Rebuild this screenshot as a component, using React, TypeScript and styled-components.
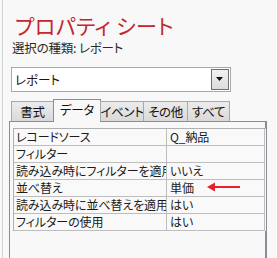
import React from "react";
import styled, { createGlobalStyle } from "styled-components";

const GlobalStyle = createGlobalStyle`
  html, body {
    margin: 0;
    padding: 0;
    background: #f8f8f8;
  }
  body {
    font-family: "Noto Sans CJK JP", "Noto Sans", sans-serif;
    font-feature-settings: "palt";
    color: #1a1a1a;
  }
`;

// window edge on the left, with the little tick of the sizing grip
const Frame = styled.div`
  position: relative;
  height: 258px;
  margin-left: 2px;
  border-left: 1px solid #d4d4d4;
  overflow: hidden;

  &::before {
    content: "";
    position: absolute;
    left: -3px;
    top: 24px;
    width: 3px;
    height: 1px;
    background: #606060;
  }
`;

const Header = styled.div`
  padding: 13px 0 0 12px;
`;

const Title = styled.div`
  font-size: 21px;
  line-height: 24px;
  color: #c4262e;
  letter-spacing: 0.5px;
`;

const Subtitle = styled.div`
  font-size: 12.5px;
  line-height: 16px;
  margin-top: 3px;
  color: #2a2a2a;
  margin-left: -3px;
  letter-spacing: -0.2px;
`;

const Select = styled.div`
  display: flex;
  align-items: center;
  justify-content: space-between;
  box-sizing: border-box;
  width: 220px;
  height: 25px;
  margin: 11px 0 0 8px;
  padding: 0 1px 0 3px;
  background: #ffffff;
  border: 1px solid #a9a9a9;
  font-size: 12.5px;
  color: #2a1010;
`;

const DropButton = styled.div`
  display: flex;
  align-items: center;
  justify-content: center;
  box-sizing: border-box;
  width: 18px;
  height: 21px;
  border: 1px solid #707070;
  background: linear-gradient(#f2f2f2, #dcdcdc);
`;

const TabStrip = styled.div`
  display: flex;
  align-items: flex-end;
  height: 24px;
  margin: 5px 0 0 8px;
  position: relative;
  z-index: 1;
`;

const Tab = styled.div<{ $w: number; $active?: boolean }>`
  box-sizing: border-box;
  width: ${(p) => p.$w}px;
  height: ${(p) => (p.$active ? 23 : 20)}px;
  margin-bottom: ${(p) => (p.$active ? -1 : 0)}px;
  display: flex;
  align-items: center;
  justify-content: center;
  white-space: nowrap;
  font-size: 12.5px;
  letter-spacing: -0.3px;
  color: #111;
  border: 1px solid ${(p) => (p.$active ? "#8c8c96" : "#a8a8a8")};
  border-bottom: none;
  background: ${(p) =>
    p.$active ? "#f8f8f8" : "linear-gradient(#ececec, #d9d9d9)"};
  padding-bottom: ${(p) => (p.$active ? 3 : 0)}px;
  & + & {
    margin-left: -1px;
  }
`;

const Panel = styled.div`
  box-sizing: border-box;
  width: 258px;
  height: 150px;
  margin-left: 6px;
  border: 1px solid #8c8c96;
  border-right-width: 2px;
  padding: 6px 0 0 3px;
`;

const Grid = styled.div`
  display: grid;
  grid-template-columns: 153px 98px;
  width: 252px;
  border-top: 1px solid #b0b0b0;
  border-left: 1px solid #b0b0b0;
  background: #f9f9f9;
`;

const Cell = styled.div<{ $value?: boolean }>`
  position: relative;
  height: 16px;
  line-height: 16px;
  padding-left: ${(p) => (p.$value ? 3 : 2)}px;
  font-size: 12px;
  letter-spacing: -0.1px;
  white-space: nowrap;
  overflow: hidden;
  border-right: 1px solid #bdbdbd;
  border-bottom: 1px solid #bdbdbd;
`;

// red callout arrow laid over the value cell
const Arrow = styled.svg`
  position: absolute;
  left: 40px;
  top: 2px;
`;

const rows: [string, string, boolean?][] = [
  ["レコードソース", "Q_納品"],
  ["フィルター", ""],
  ["読み込み時にフィルターを適用", "いいえ"],
  ["並べ替え", "単価", true],
  ["読み込み時に並べ替えを適用", "はい"],
  ["フィルターの使用", "はい"],
];

const tabs: [string, number][] = [
  ["書式", 43],
  ["データ", 48],
  ["イベント", 44],
  ["その他", 45],
  ["すべて", 43],
];

export default function App() {
  return (
    <>
      <GlobalStyle />
      <Frame>
        <Header>
          <Title>プロパティ シート</Title>
          <Subtitle>選択の種類: レポート</Subtitle>
        </Header>
        <Select>
          <span>レポート</span>
          <DropButton>
            <svg width="8" height="5" viewBox="0 0 8 5">
              <path d="M0 0h7L3.5 4z" fill="#111" />
            </svg>
          </DropButton>
        </Select>
        <TabStrip>
          {tabs.map(([label, w]) => (
            <Tab key={label} $w={w} $active={label === "データ"}>
              {label}
            </Tab>
          ))}
        </TabStrip>
        <Panel>
          <Grid>
            {rows.map(([name, value, mark]) => (
              <React.Fragment key={name}>
                <Cell>{name}</Cell>
                <Cell $value>
                  {value}
                  {mark && (
                    <Arrow width="33" height="10" viewBox="0 0 33 10">
                      <path d="M4 5H33" stroke="#e8202a" strokeWidth="2" />
                      <path d="M0 5L8 0.5V9.5z" fill="#e8202a" />
                    </Arrow>
                  )}
                </Cell>
              </React.Fragment>
            ))}
          </Grid>
        </Panel>
      </Frame>
    </>
  );
}
